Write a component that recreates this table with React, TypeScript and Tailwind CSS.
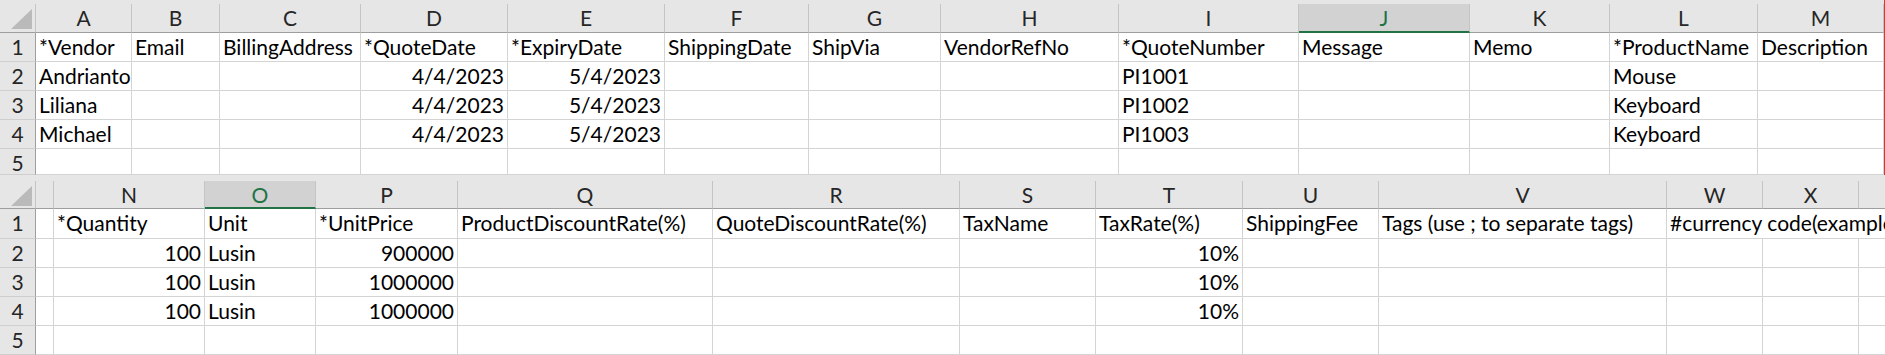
import React from "react";

type Col = { key: string; selected?: boolean };

const FONT = "font-['Lato','Liberation_Sans',sans-serif]";

const topCols: Col[] = [
  { key: "A" }, { key: "B" }, { key: "C" }, { key: "D" }, { key: "E" }, { key: "F" },
  { key: "G" }, { key: "H" }, { key: "I" }, { key: "J", selected: true }, { key: "K" },
  { key: "L" }, { key: "M" },
];

type Cell = { v?: string; right?: boolean; span?: number };

const topRows: Cell[][] = [
  [
    { v: "*Vendor" }, { v: "Email" }, { v: "BillingAddress" }, { v: "*QuoteDate" },
    { v: "*ExpiryDate" }, { v: "ShippingDate" }, { v: "ShipVia" }, { v: "VendorRefNo" },
    { v: "*QuoteNumber" }, { v: "Message" }, { v: "Memo" }, { v: "*ProductName" },
    { v: "Description" },
  ],
  [
    { v: "Andrianto" }, {}, {}, { v: "4/4/2023", right: true }, { v: "5/4/2023", right: true },
    {}, {}, {}, { v: "PI1001" }, {}, {}, { v: "Mouse" }, {},
  ],
  [
    { v: "Liliana" }, {}, {}, { v: "4/4/2023", right: true }, { v: "5/4/2023", right: true },
    {}, {}, {}, { v: "PI1002" }, {}, {}, { v: "Keyboard" }, {},
  ],
  [
    { v: "Michael" }, {}, {}, { v: "4/4/2023", right: true }, { v: "5/4/2023", right: true },
    {}, {}, {}, { v: "PI1003" }, {}, {}, { v: "Keyboard" }, {},
  ],
  [{}, {}, {}, {}, {}, {}, {}, {}, {}, {}, {}, {}, {}],
];

const bottomCols: Col[] = [
  { key: "" }, { key: "N" }, { key: "O", selected: true }, { key: "P" }, { key: "Q" },
  { key: "R" }, { key: "S" }, { key: "T" }, { key: "U" }, { key: "V" }, { key: "W" },
  { key: "X" }, { key: "" },
];

const qtyRow = (price: string): Cell[] => [
  {}, { v: "100", right: true }, { v: "Lusin" }, { v: price, right: true }, {}, {}, {},
  { v: "10%", right: true }, {}, {}, {}, {}, {},
];

const bottomRows: Cell[][] = [
  [
    {}, { v: "*Quantity" }, { v: "Unit" }, { v: "*UnitPrice" }, { v: "ProductDiscountRate(%)" },
    { v: "QuoteDiscountRate(%)" }, { v: "TaxName" }, { v: "TaxRate(%)" }, { v: "ShippingFee" },
    { v: "Tags (use ; to separate tags)" }, { v: "#currency code(example: USD)", span: 3 },
  ],
  qtyRow("900000"),
  qtyRow("1000000"),
  qtyRow("1000000"),
  [{}, {}, {}, {}, {}, {}, {}, {}, {}, {}, {}, {}, {}],
];

function Corner() {
  return (
    <div className="relative h-full border-r border-b border-r-[#c4c4c4] border-b-[#9e9e9e] bg-[#e6e6e6]">
      <svg className="absolute left-0 top-0" width="35" height="28" viewBox="0 0 35 28">
        <polygon points="32,5 32,25 11,25" fill="#bababa" />
      </svg>
    </div>
  );
}

function ColHeader({ col, h }: { col: Col; h: string }) {
  if (col.selected) {
    return (
      <div
        className={`${h} flex items-start justify-center border-r border-r-[#c4c4c4] border-b-2 border-b-[#217346] bg-[#d2d2d2] text-[#217346] leading-[28px] text-[21px] ${FONT}`}
      >
        {col.key}
      </div>
    );
  }
  return (
    <div
      className={`${h} flex items-start justify-center border-r border-b border-r-[#c4c4c4] border-b-[#9e9e9e] bg-[#e6e6e6] text-[#262626] leading-[28px] text-[21px] ${FONT}`}
    >
      {col.key}
    </div>
  );
}

function RowHeader({ n, h }: { n: number; h: string }) {
  return (
    <div
      className={`${h} flex items-start justify-center border-r border-b border-r-[#9e9e9e] border-b-[#cfcfcf] bg-[#e6e6e6] text-[#262626] leading-[28px] text-[21px] ${FONT}`}
    >
      {n}
    </div>
  );
}

function DataCell({ cell, h }: { cell: Cell; h: string }) {
  const spanClass = cell.span === 3 ? "col-span-3" : "";
  return (
    <div
      className={`${h} ${spanClass} overflow-hidden whitespace-nowrap border-r border-b border-[#d4d4d4] bg-white px-[3px] text-black leading-[28px] text-[21px] ${FONT} ${cell.right ? "text-right" : "text-left"}`}
    >
      {cell.v ?? ""}
    </div>
  );
}

export default function App() {
  return (
    <div className="h-[355px] w-[1885px] overflow-hidden bg-[#e6e6e6]">
      {/* upper pane: columns A–M */}
      <div className="flex">
        <div className="flex-1">
          <div className="h-[4px]" />
          <div className="grid grid-cols-[36px_96px_88px_141px_147px_157px_144px_132px_178px_180px_171px_140px_148px_126px]">
            <div className="h-[29px]">
              <Corner />
            </div>
            {topCols.map((c) => (
              <ColHeader key={c.key} col={c} h="h-[29px]" />
            ))}
            {topRows.map((row, i) => {
              const h = i === 4 ? "h-[26px]" : "h-[29px]";
              return (
                <React.Fragment key={i}>
                  <RowHeader n={i + 1} h={h} />
                  {row.map((cell, j) => (
                    <DataCell key={j} cell={cell} h={h} />
                  ))}
                </React.Fragment>
              );
            })}
          </div>
        </div>
        <div className="w-px bg-[#e2322b]" />
      </div>

      <div className="h-[6px]" />

      {/* lower pane: columns N–X */}
      <div className="grid w-[1899px] grid-cols-[36px_18px_151px_111px_142px_255px_247px_136px_147px_136px_288px_96px_96px_40px]">
        <div className="h-[28px]">
          <Corner />
        </div>
        {bottomCols.map((c, i) => (
          <ColHeader key={i} col={c} h="h-[28px]" />
        ))}
        {bottomRows.map((row, i) => {
          const h = i === 0 ? "h-[30px]" : "h-[29px]";
          return (
            <React.Fragment key={i}>
              <RowHeader n={i + 1} h={h} />
              {row.map((cell, j) => (
                <DataCell key={j} cell={cell} h={h} />
              ))}
            </React.Fragment>
          );
        })}
      </div>
    </div>
  );
}
